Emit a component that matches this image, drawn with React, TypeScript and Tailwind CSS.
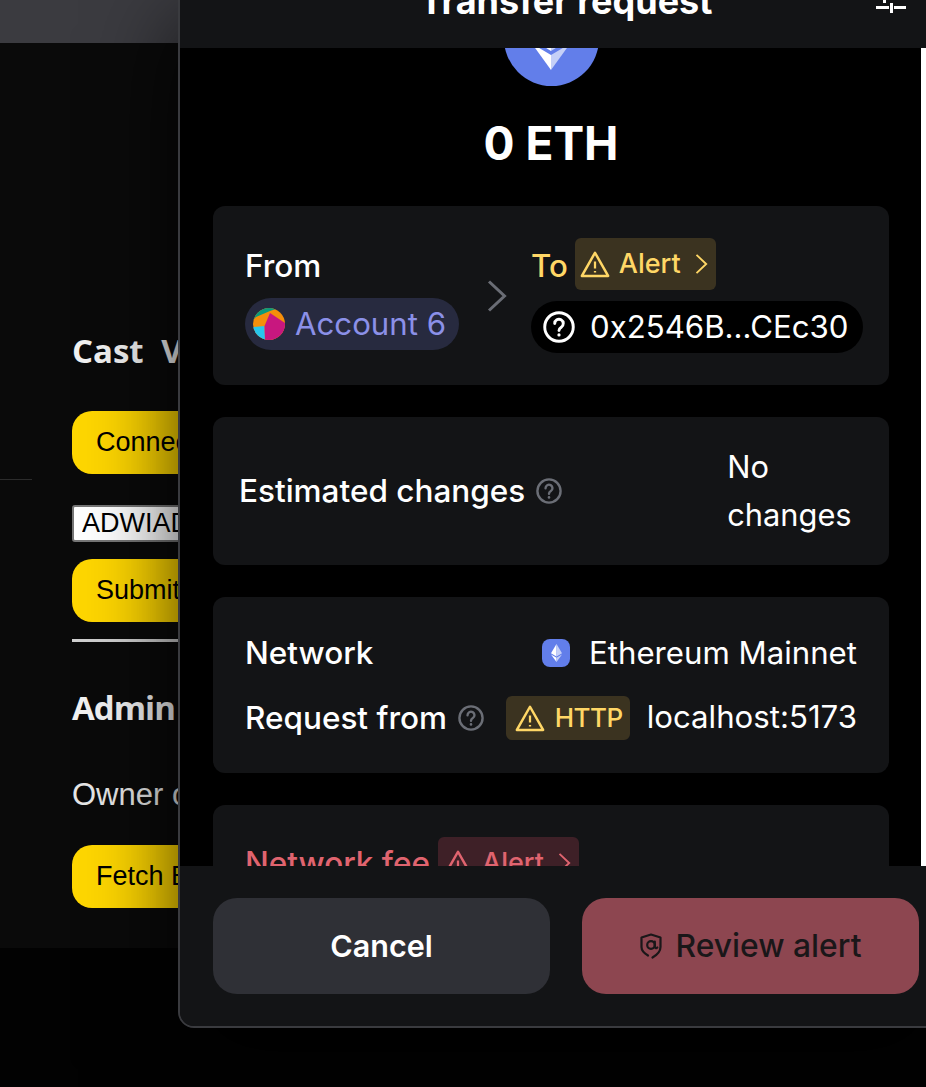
function WarnIcon({ className }: { className: string }) {
  return (
    <svg viewBox="0 0 24 24" fill="none" stroke="currentColor" strokeWidth="2" strokeLinejoin="round" className={className}>
      <path d="M12 3 22.5 21.5h-21L12 3Z" />
      <path d="M12 10v5.5M12 17.5v1.2" strokeWidth="1.8" />
    </svg>
  );
}

function HelpIcon({ className }: { className: string }) {
  return (
    <svg viewBox="0 0 24 24" fill="none" stroke="currentColor" strokeWidth="2.2" strokeLinecap="round" className={className}>
      <circle cx="12" cy="12" r="10.7" />
      <path d="M8.8 9.4a3.2 3.2 0 1 1 4.9 2.7c-1.1.7-1.7 1.3-1.7 2.5" />
      <path d="M12 17.8v.2" strokeWidth="2.4" />
    </svg>
  );
}

function EthGlyph({ className }: { className: string }) {
  return (
    <svg viewBox="0 0 32 52" className={className}>
      <path d="M16 0 0 26.5 16 36z" fill="#ffffff" />
      <path d="M16 0v36l16-9.5z" fill="#c5d0f7" />
      <path d="M0 30 16 52V39.5z" fill="#ffffff" />
      <path d="M32 30 16 52V39.5z" fill="#c5d0f7" />
    </svg>
  );
}

function Avatar() {
  return (
    <svg viewBox="0 0 32 32" className="h-8 w-8 shrink-0 rounded-full">
      <rect width="32" height="32" fill="#f58e0a" />
      <path d="M0 0h26L17 3 3 9 0 12z" fill="#0b9a7c" />
      <path d="M0 19l11.5-1L12 32H0z" fill="#28c6ee" />
      <path d="M17 5 32 15v17H12l-.5-14z" fill="#c8177f" />
    </svg>
  );
}

function Chevron({ className }: { className: string }) {
  return (
    <svg viewBox="0 0 20 32" fill="none" stroke="currentColor" strokeWidth="3" className={className}>
      <path d="M2 1.5 17.5 16 2 30.5" />
    </svg>
  );
}

function AlertBadge({ tone }: { tone: "warn" | "danger" }) {
  const danger = tone === "danger";
  return (
    <div className={`flex h-[52px] w-[141px] items-center rounded-md pl-[5px] ${danger ? "bg-[#3e2027] text-[#e0646f]" : "bg-[#3b3320] text-[#ffd766]"}`}>
      <WarnIcon className="h-[30px] w-[30px]" />
      <span className="ml-[9px] text-[27px] font-medium">Alert</span>
      <Chevron className="ml-[14px] h-[20px] w-[13px]" />
    </div>
  );
}

const YellowButton = ({ label }: { label: string }) => (
  <button className="h-[63px] w-[300px] rounded-[20px] bg-[#ffd700] pl-6 text-left font-['Liberation_Sans',sans-serif] text-[27px] whitespace-nowrap text-black">
    {label}
  </button>
);

function BackgroundPage() {
  return (
    <div className="h-[948px] bg-[#0a0a0a]">
      <div className="h-[43px] bg-[#3b3b40]" />
      <div className="relative flex flex-col items-start pt-[286px] pl-[72px]">
        <div className="absolute top-[436px] left-0 h-px w-8 bg-[#2c2c2c]" />
        <h2 className="mb-[38px] font-['Open_Sans',sans-serif] text-[33px] leading-[44px] font-bold whitespace-nowrap text-[#f2f2f2] [word-spacing:9px]">Cast Vote</h2>
        <YellowButton label="Connect Wallet" />
        <input
          readOnly
          value="ADWIADMIN"
          className="mt-[31px] h-[37px] w-[300px] rounded-[3px] border-2 border-[#767676] bg-white px-2 font-['Liberation_Sans',sans-serif] text-[27px] text-black"
        />
        <div className="mt-[17px]">
          <YellowButton label="Submit Vote" />
        </div>
        <div className="mt-[17px] h-[3px] w-[300px] bg-[#cfcfcf]" />
        <h2 className="mt-[44px] font-['Open_Sans',sans-serif] text-[33px] leading-[44px] font-bold tracking-[-1px] whitespace-nowrap text-[#f2f2f2]">Admin</h2>
        <p className="mt-[43px] mb-[28px] font-['Liberation_Sans',sans-serif] text-[31px] leading-[44px] whitespace-nowrap text-[#e6e6e6]">Owner of</p>
        <YellowButton label="Fetch Balance" />
      </div>
    </div>
  );
}

function TransferModal() {
  return (
    <div className="absolute top-[-22px] left-[178px] flex h-[1050px] w-[776px] flex-col overflow-hidden rounded-2xl border-2 border-[#3a3b3f] bg-[#131416] font-['Inter',sans-serif] text-[31.2px] text-white shadow-[0_44px_90px_rgba(0,0,0,0.75)]">
      <header className="relative h-[68px] shrink-0 bg-[#131416] text-center">
        <h1 className="mt-[1px] text-[36px] leading-10 font-bold">Transfer request</h1>
        {/* settings glyph, mostly cut off by the window */}
        <div className="absolute top-[20px] left-[703px] h-[3px] w-[3px] bg-white" />
        <div className="absolute top-[26px] left-[696px] h-[3px] w-[30px] bg-white" />
        <div className="absolute top-[23px] left-[709px] h-[10px] w-[5px] border-x border-[#131416] bg-white" />
      </header>

      <div className="flex min-h-0 flex-1">
        <div className="w-[741px] shrink-0 overflow-hidden bg-black pr-8 pl-[33px]">
          <div className="relative z-0 mx-auto mt-[-57px] flex h-[95px] w-[95px] items-center justify-center rounded-full bg-[#627eea]">
            <EthGlyph className="h-[62px] w-[38px]" />
          </div>
          <div className="mt-[29px] mb-[35px] text-center text-[46px] leading-[56px] font-bold">0 ETH</div>

          <section className="flex h-[179px] rounded-xl bg-[#131416] pt-8 pl-8">
            <div className="flex w-[214px] flex-col items-start">
              <div className="flex h-[52px] items-center pt-1 text-[31.5px] font-medium">From</div>
              <div className="mt-[8px] flex h-[52px] w-[214px] items-center gap-[10px] rounded-full bg-[#272a3f] pl-2 text-[#8b90e8]">
                <Avatar />
                Account 6
              </div>
            </div>
            <Chevron className="mt-[42px] ml-[28px] h-8 w-5 text-[#6a6d75]" />
            <div className="ml-[24px] flex flex-col items-start">
              <div className="flex items-center gap-[7px] font-medium text-[#ffd766]">
                <span className="pt-1">To</span>
                <AlertBadge tone="warn" />
              </div>
              <div className="mt-[11px] flex h-[52px] w-[332px] items-center gap-[15px] rounded-full bg-black pl-3">
                <HelpIcon className="h-8 w-8" />
                0x2546B…CEc30
              </div>
            </div>
          </section>

          <section className="mt-8 flex h-[148px] items-center rounded-xl bg-[#131416] pl-[26px]">
            <span className="text-[31.5px] font-medium">Estimated changes</span>
            <HelpIcon className="ml-[11px] h-[26px] w-[26px] text-[#6b6e76]" />
            <span className="ml-[165px] w-[130px] text-[30.8px] leading-[48px]">No changes</span>
          </section>

          <section className="mt-8 flex h-[176px] flex-col rounded-xl bg-[#131416] pt-[42px] pr-8 pl-8">
            <div className="flex h-7 items-center">
              <span className="text-[31.5px] font-medium">Network</span>
              <span className="ml-auto flex h-7 w-7 items-center justify-center rounded-lg bg-[#627eea]">
                <EthGlyph className="h-[18px] w-[11px]" />
              </span>
              <span className="ml-[19px]">Ethereum Mainnet</span>
            </div>
            <div className="mt-[27px] flex items-center">
              <span className="text-[31.5px] font-medium">Request from</span>
              <HelpIcon className="ml-[11px] h-[26px] w-[26px] text-[#6b6e76]" />
              <div className="ml-auto flex h-[44px] w-[124px] items-center gap-[10px] rounded-md bg-[#3b3320] pl-[9px] text-[26px] font-medium tracking-[-0.5px] text-[#ffd766]">
                <WarnIcon className="h-[30px] w-[30px]" />
                HTTP
              </div>
              <span className="ml-[17px]">localhost:5173</span>
            </div>
          </section>

          <section className="mt-8 h-[200px] rounded-xl bg-[#131416] pt-8 pl-8">
            <div className="flex items-center gap-2 text-[31.5px] font-medium text-[#e0646f]">
              <span>Network fee</span>
              <AlertBadge tone="danger" />
            </div>
          </section>
        </div>
        <div className="flex-1 bg-white" />
      </div>

      <footer className="flex h-[160px] shrink-0 gap-8 bg-[#131416] pt-8 pl-[33px]">
        <button className="h-24 w-[337px] rounded-[24px] bg-[#2f3036] text-[30.5px] font-semibold">Cancel</button>
        <button className="flex h-24 w-[337px] items-center justify-center gap-[14px] rounded-[24px] bg-[#8d4650] text-[31.8px] font-medium text-[#1a1719]">
          <svg viewBox="0 0 22 26" fill="none" stroke="currentColor" strokeWidth="2.2" strokeLinecap="round" strokeLinejoin="round" className="h-[26px] w-[22px]">
            <path d="M12.5 24.5c3.5-2 8-5.500 8-10.500V4.500L11 1.500 1.500 4.500V14c0 4 3 6.500 6.500 8.500" />
            <circle cx="11" cy="12" r="3.800" />
            <path d="M14.800 8.500v5c0 1.500 1.500 2 2.500 1" />
          </svg>
          Review alert
        </button>
      </footer>
    </div>
  );
}

export default function App() {
  return (
    <div className="relative h-[1087px] w-[926px] overflow-hidden bg-[#020202]">
      <BackgroundPage />
      <TransferModal />
    </div>
  );
}
